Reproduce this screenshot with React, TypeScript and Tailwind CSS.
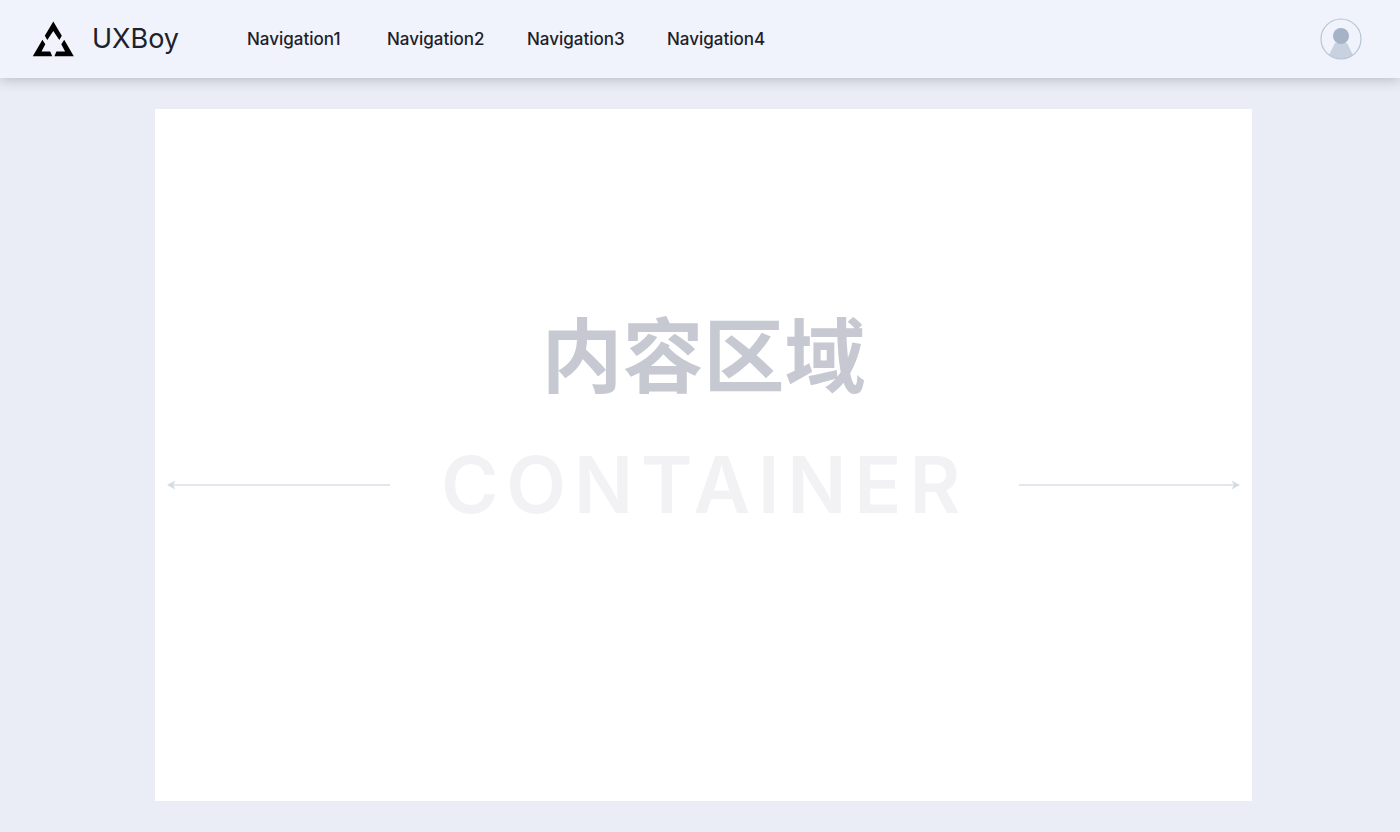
import React from "react";

const navItems = [
  { label: "Navigation1", href: "#navigation1" },
  { label: "Navigation2", href: "#navigation2" },
  { label: "Navigation3", href: "#navigation3" },
  { label: "Navigation4", href: "#navigation4" },
];

const Logo: React.FC = () => (
  <svg className="w-[42px] h-9" viewBox="0 0 42 36" fill="#000" aria-hidden="true">
    <path d="M21.300 0.500L29.800 14.700L27.300 19L21.300 10L15.300 19L12.800 14.700Z" />
    <path d="M10.400 18.800L13.300 23.200L9.500 30.600H18.200L20.200 35.300H0.800Z" />
    <path d="M32.200 18.800L41.800 35.300H22.400L24.400 30.600H33.100L29.300 23.200Z" />
  </svg>
);

const Avatar: React.FC = () => (
  <svg className="w-[42px] h-[42px]" viewBox="0 0 42 42" fill="none" aria-hidden="true">
    <path d="M15 25H27L33 37Q27.500 41 21 41T9 37Z" fill="#c8d1e0" />
    <circle cx="21" cy="18" r="8" fill="#a6b2c5" />
    <circle cx="21" cy="21" r="20" stroke="#b9c4d3" strokeWidth="1.200" />
  </svg>
);

const ArrowHead: React.FC<{ className?: string }> = ({ className }) => (
  <svg className={className} width="9" height="10" viewBox="0 0 9 10" aria-hidden="true">
    <path d="M5 4H9V6H5Z" fill="#e4e8ee" />
    <path d="M0 5L8.500 0.500L6 5L8.500 9.500Z" fill="#d5dbe4" />
  </svg>
);

export default function App() {
  return (
    <div className="min-h-screen flex flex-col bg-[#eaedf5] font-[Inter,'Noto_Sans_CJK_SC',sans-serif] text-[#1d212b]">
      {/* Header */}
      <header className="z-10 flex items-center h-[78px] pl-8 pr-[38px] bg-[#f0f3fb] shadow-[0_2px_12px_rgba(40,45,70,0.25)]">
        <a href="#home" className="flex items-center gap-[18px]">
          <Logo />
          <span className="text-[27px] leading-9">UXBoy</span>
        </a>
        <nav className="flex items-center gap-10 ml-[68px] text-[17px] leading-6 font-medium">
          {navItems.map((item) => (
            <a key={item.label} href={item.href} className="w-[100px]">
              {item.label}
            </a>
          ))}
        </nav>
        <button type="button" aria-label="Account" className="ml-auto rounded-full">
          <Avatar />
        </button>
      </header>

      {/* Content */}
      <main className="flex-1 flex pt-[31px] pb-[31px] pl-[155px] pr-[148px]">
        <section className="flex-1 flex flex-col items-center justify-center gap-[38px] px-3 pb-[74px] bg-white">
          <h1 className="text-[81px] leading-[96px] font-bold text-[#c7c9d2] font-['Noto_Sans_CJK_SC',sans-serif]">
            内容区域
          </h1>
          <div className="w-full flex items-center justify-between">
            <div className="w-[223px] flex items-center">
              <ArrowHead />
              <span className="flex-1 h-[2px] bg-[#e4e8ee]" />
            </div>
            <p className="text-[78px] leading-[96px] font-semibold tracking-widest text-[#f2f2f4]">CONTAINER</p>
            <div className="w-[221px] flex items-center">
              <span className="flex-1 h-[2px] bg-[#e4e8ee]" />
              <ArrowHead className="rotate-180" />
            </div>
          </div>
        </section>
      </main>
    </div>
  );
}
